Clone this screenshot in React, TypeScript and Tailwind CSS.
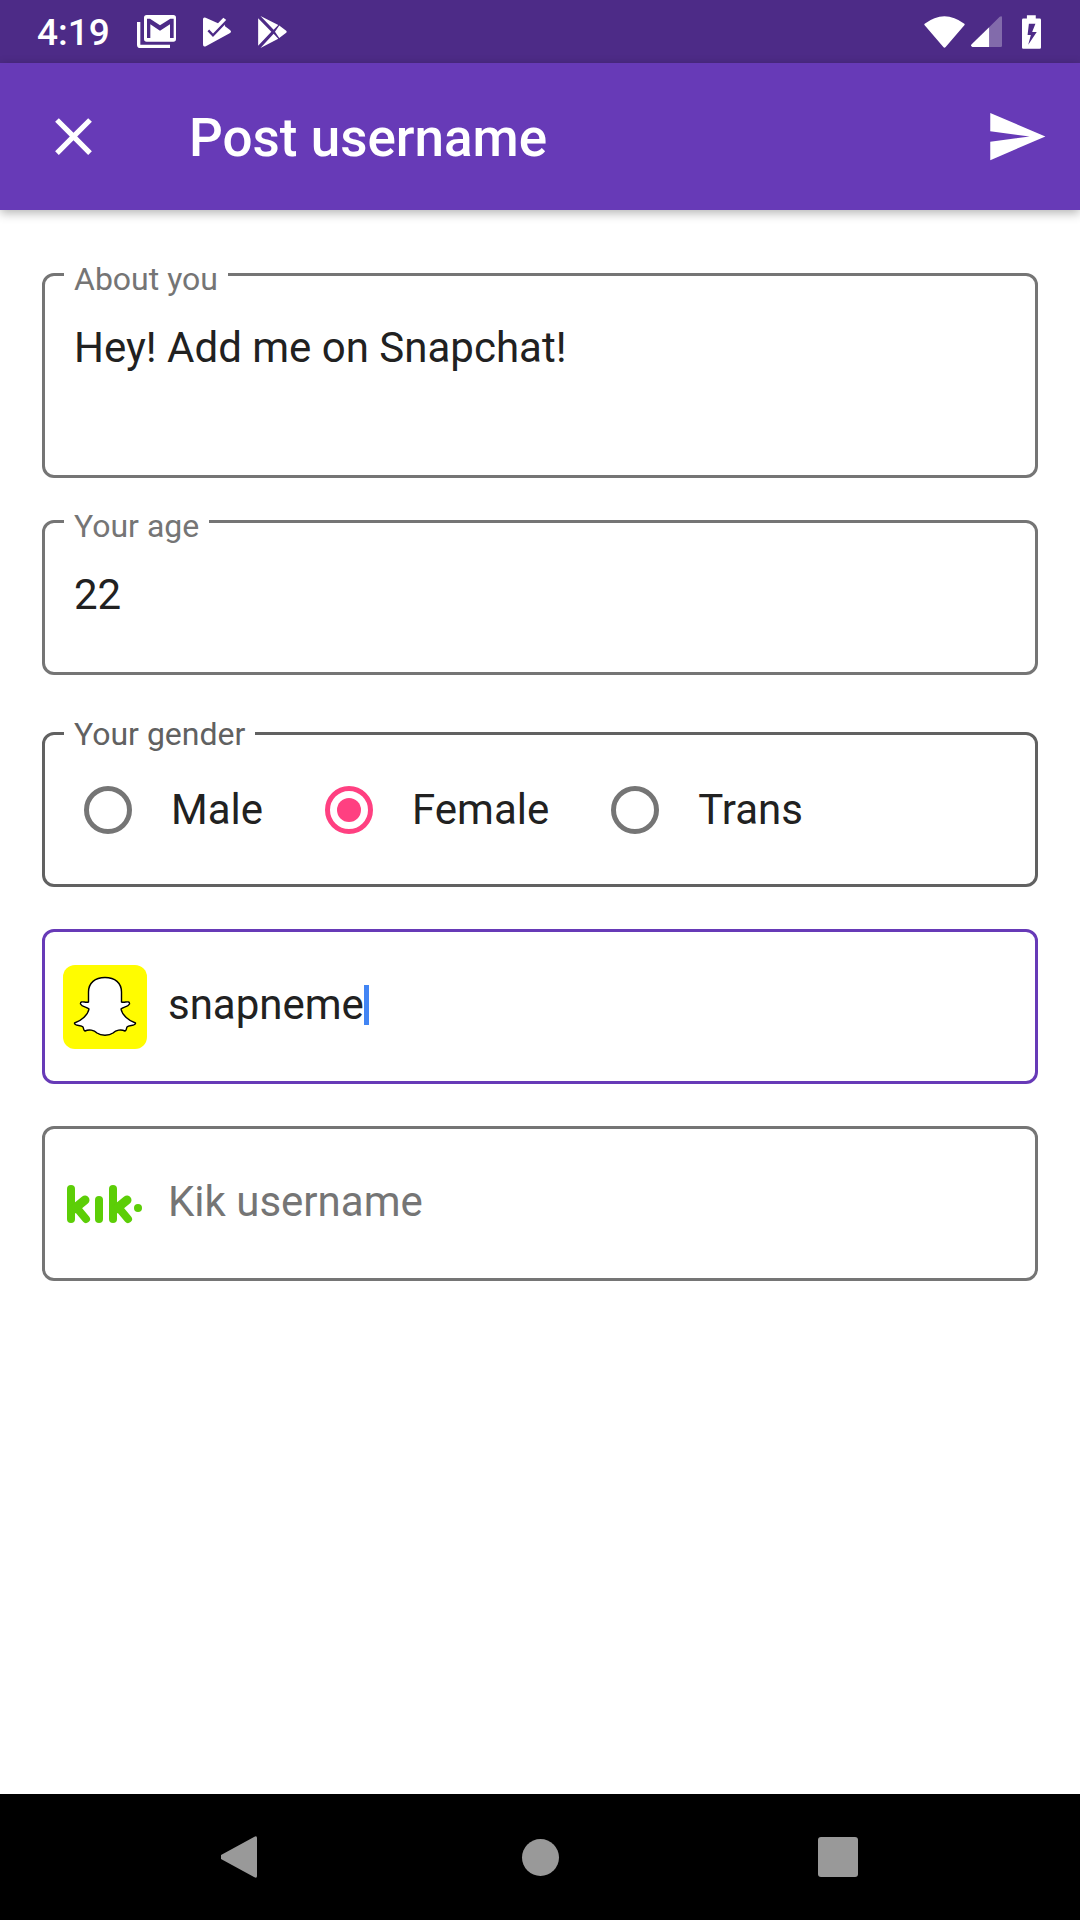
import { useState } from "react";
import type { ReactNode } from "react";

const GENDERS = ["Male", "Female", "Trans"];

export default function App() {
  const [about, setAbout] = useState("Hey! Add me on Snapchat!");
  const [age, setAge] = useState("22");
  const [gender, setGender] = useState("Female");
  const [snap, setSnap] = useState("snapneme");
  const [kik, setKik] = useState("");

  return (
    <div className="flex min-h-screen flex-col bg-white font-[Roboto,sans-serif] text-[42px] leading-[50px] text-[#212121]">
      <StatusBar />

      <header className="flex h-[147px] items-center bg-[#673ab7] pl-[42px] pr-8 text-white shadow-[0_3px_10px_rgba(0,0,0,0.3)]">
        <button type="button" aria-label="Close">
          <svg viewBox="0 0 24 24" className="size-[63px]" fill="currentColor">
            <path d="M19 6.41L17.59 5 12 10.59 6.41 5 5 6.41 10.59 12 5 17.59 6.41 19 12 13.41 17.59 19 19 17.59 13.41 12z" />
          </svg>
        </button>
        <h1 className="ml-[84px] flex-1 pt-[3px] text-[53px] font-medium leading-[60px]">Post username</h1>
        <button type="submit" form="post-form" aria-label="Send">
          <svg viewBox="0 0 24 24" className="size-[63px]" fill="currentColor">
            <path d="M2.01 21L23 12 2.01 3 2 10l15 2-15 2z" />
          </svg>
        </button>
      </header>

      <main className="flex-1 px-[42px] pt-[63px]">
        <form id="post-form" onSubmit={(e) => e.preventDefault()}>
          <div className="relative h-[205px] rounded-xl border-3 border-[#757575] px-[29px] pt-[47px]">
            <FloatingLabel htmlFor="about">About you</FloatingLabel>
            <textarea
              id="about"
              rows={2}
              value={about}
              onChange={(e) => setAbout(e.target.value)}
              className="block w-full resize-none outline-none"
            />
          </div>

          <div className="relative mt-[42px] h-[155px] rounded-xl border-3 border-[#757575] px-[29px] pt-[47px]">
            <FloatingLabel htmlFor="age">Your age</FloatingLabel>
            <input
              id="age"
              inputMode="numeric"
              value={age}
              onChange={(e) => setAge(e.target.value)}
              className="block h-[50px] w-full outline-none"
            />
          </div>

          <div
            role="radiogroup"
            aria-labelledby="gender-label"
            className="relative mt-[57px] flex h-[155px] items-center gap-[62px] rounded-xl border-3 border-[#616161] px-[39px]"
          >
            <span
              id="gender-label"
              className="absolute -top-5 left-[19px] bg-white px-[10px] text-[32px] leading-[38px] text-[#616161]"
            >
              Your gender
            </span>
            {GENDERS.map((g) => (
              <label key={g} className="flex items-center gap-[39px]">
                <input
                  type="radio"
                  name="gender"
                  value={g}
                  checked={gender === g}
                  onChange={() => setGender(g)}
                  className="size-12 appearance-none rounded-full border-5 border-[#757575] bg-white bg-clip-content p-[7px] checked:border-[#ff4081] checked:bg-[#ff4081]"
                />
                {g}
              </label>
            ))}
          </div>

          <label className="mt-[42px] flex h-[155px] items-center rounded-xl border-3 border-[#673ab7] px-[18px]">
            <SnapchatLogo />
            <span className="ml-[21px] flex flex-1 items-center pb-1">
              <input
                aria-label="Snapchat username"
                value={snap}
                onChange={(e) => setSnap(e.target.value)}
                className="h-[50px] field-sizing-content caret-transparent outline-none"
              />
              <span className="h-10 w-[5px] bg-[#4285f4]" />
            </span>
          </label>

          <label className="mt-[42px] flex h-[155px] items-center rounded-xl border-3 border-[#757575] px-[18px]">
            <KikLogo />
            <span className="ml-[21px] flex flex-1 items-center pb-1">
              <input
                aria-label="Kik username"
                placeholder="Kik username"
                value={kik}
                onChange={(e) => setKik(e.target.value)}
                className="h-[50px] min-w-0 flex-1 outline-none placeholder:text-[#757575]"
              />
            </span>
          </label>
        </form>
      </main>

      <NavBar />
    </div>
  );
}

function FloatingLabel({ htmlFor, children }: { htmlFor: string; children: ReactNode }) {
  return (
    <label
      htmlFor={htmlFor}
      className="absolute -top-4 left-[19px] bg-white px-[10px] text-[32px] leading-[38px] text-[#757575]"
    >
      {children}
    </label>
  );
}

function StatusBar() {
  return (
    <div className="flex h-[63px] items-center bg-[#4d2b87] pl-[37px] pr-[39px] text-white">
      <span className="pt-[2px] text-[37px] font-medium leading-[42px]">4:19</span>

      {/* Notifications */}
      <div className="ml-[27px] flex flex-1 items-center gap-[27px]">
        <svg viewBox="411 45 117 99" className="h-[33px] w-[39px]" fill="currentColor">
          <path d="M411 66h10v68h89v10h-89q-10 0-10-10z" />
          <path
            fillRule="evenodd"
            d="M440 45h80q8 0 8 8v64q0 8-8 8h-80q-8 0-8-8V53q0-8 8-8zM441 56v58h10V73l29 19 30-19v41h11V56h-10l-31 20-30-20z"
          />
        </svg>
        <svg viewBox="606 50 84 90" className="h-[30px] w-[28px]" fill="currentColor">
          <path d="M606 57q0-8 8-5l37 17 16-17 10 8-6 12 1 6 14 10q8 6 0 11l-70 38q-10 5-10-5z" />
          <path d="M622 90l14 15 44-46" fill="none" stroke="#4d2b87" strokeWidth="7" />
        </svg>
        <svg viewBox="777 46 87 97" className="h-[32px] w-[29px]" fill="currentColor">
          <path d="M777 53l40 41-40 42zM784 46l54 27-14 15zM784 143l40-43 14 15zM841 75l21 16q3 3 0 6l-21 16-13-19z" />
        </svg>
      </div>

      {/* Wifi, signal, battery */}
      <div className="flex items-center">
        <svg viewBox="132 42 123 96" className="h-[32px] w-[41px]" fill="currentColor">
          <path d="M134 65Q193 20 253 65q2 2 0 5l-56 65q-4 4-7 0l-56-65q-2-3 0-5z" />
        </svg>
        <svg viewBox="272 47 94 94" className="ml-[6px] size-[31px]" fill="currentColor">
          <path d="M327 81v60h-51q-7-3-2-8z" />
          <path opacity="0.3" d="M327 81l32-32q7-4 7 2v86q0 4-4 4h-35z" />
        </svg>
        <svg viewBox="426 42 58 102" className="ml-[20px] h-[34px] w-[19px]" fill="currentColor">
          <path
            fillRule="evenodd"
            d="M441 42h27v10h12q4 0 4 4v84q0 4-4 4h-50q-4 0-4-4V56q0-4 4-4h11zM447 68l-4 34h10l-8 30 26-39h-14l10-25z"
          />
        </svg>
      </div>
    </div>
  );
}

function SnapchatLogo() {
  return (
    <svg viewBox="0 0 84 84" className="size-[84px] shrink-0">
      <rect width="84" height="84" rx="12" fill="#fffc00" />
      <path
        d="M42 12.5C32 12.5 25.500 18 25.500 27V37C22 38 17 35 17.500 39C19 42 24 42 26 44C25 50 18 56 11.500 58C11 61 18 60 20 62C21 64 20 65 22 66C26 64 31 65 34 68C38 71 46 71 50 68C53 65 58 64 62 66C64 65 63 64 64 62C66 60 73 61 72.500 58C66 56 59 50 58 44C60 42 65 42 66.500 39C67 35 62 38 58.500 37V27C58.500 18 52 12.500 42 12.500z"
        fill="#fff"
        stroke="#000"
        strokeWidth="1.4"
        strokeLinejoin="round"
      />
    </svg>
  );
}

function KikLogo() {
  return (
    <svg viewBox="0 0 84 84" className="size-[84px] shrink-0" stroke="#5cce07" strokeWidth="8" strokeLinecap="round">
      <line x1="8" y1="27" x2="8" y2="57" />
      <line x1="22" y1="38" x2="11" y2="47" strokeWidth="9" />
      <line x1="13" y1="45" x2="23" y2="57" />
      <line x1="36" y1="38" x2="36" y2="57" />
      <line x1="50" y1="27" x2="50" y2="57" />
      <line x1="64" y1="38" x2="53" y2="47" strokeWidth="9" />
      <line x1="55" y1="45" x2="65" y2="57" />
      <circle cx="75" cy="46" r="4" fill="#5cce07" stroke="none" />
    </svg>
  );
}

function NavBar() {
  return (
    <nav className="flex h-[126px] items-center justify-center bg-black text-[#999999]">
      <button type="button" aria-label="Back" className="flex w-[298px] justify-center">
        <svg viewBox="0 0 42 42" className="size-[42px]" fill="currentColor">
          <path d="M0 19L33 1q3-2 3 1v38q0 3-3 1L0 23q-2-2 0-4z" />
        </svg>
      </button>
      <button type="button" aria-label="Home" className="flex w-[298px] justify-center">
        <span className="size-[37px] rounded-full bg-current" />
      </button>
      <button type="button" aria-label="Recent apps" className="flex w-[298px] justify-center">
        <span className="size-10 rounded-[3px] bg-current" />
      </button>
    </nav>
  );
}
